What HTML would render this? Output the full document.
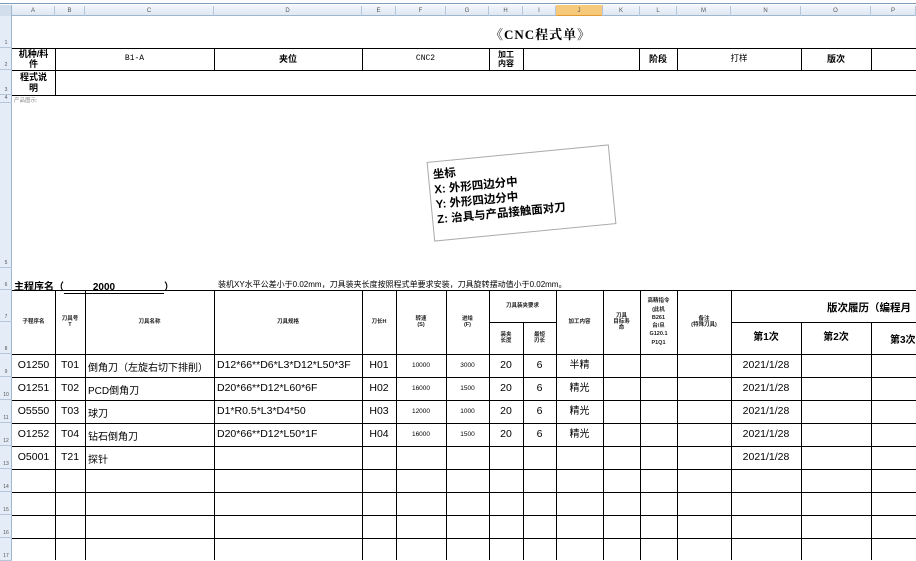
<!DOCTYPE html>
<html><head><meta charset="utf-8"><style>
*{margin:0;padding:0;box-sizing:border-box}
body{width:916px;height:560px;overflow:hidden;background:#fff;position:relative;font-family:"Liberation Sans","Noto Sans CJK SC",sans-serif;color:#000}
.a{position:absolute}
.h{position:absolute;height:1px;background:#000}
.v{position:absolute;width:1px;background:#000}
.c{position:absolute;display:flex;align-items:center;justify-content:center;text-align:center;line-height:1.15}
.ch{position:absolute;top:6px;height:10px;font-size:6px;color:#555;display:flex;align-items:center;justify-content:center;border-right:1px solid #b5c6da}
.rn{position:absolute;left:0;width:12px;font-size:5px;color:#555;text-align:center;border-bottom:1px solid #b5c6da}
.t{font-size:5.5px;font-weight:bold;color:#222}
.d{font-size:10.5px}
.s{font-size:6.5px}
</style></head><body>
<div class="a" style="left:0;top:0;width:916px;height:4px;background:#fff;border-bottom:1px solid #7f9db9"></div>
<div class="a" style="left:0;top:5px;width:916px;height:11px;background:linear-gradient(#f3f6fb,#dfe7f2);border-bottom:1px solid #9eb6ce"></div>
<div class="a" style="left:556px;top:5px;width:47px;height:11px;background:#f7c97a;border-bottom:1px solid #e39b2f"></div>
<div class="a" style="left:0;top:16px;width:12px;height:544px;background:#e4ecf7;border-right:1px solid #9eb6ce"></div>
<div class="a" style="left:0;top:5px;width:12px;height:11px;background:#d3deed;border-right:1px solid #9eb6ce"></div>
<div class="ch" style="left:12px;width:43px">A</div><div class="ch" style="left:55px;width:30px">B</div><div class="ch" style="left:85px;width:129px">C</div><div class="ch" style="left:214px;width:148px">D</div><div class="ch" style="left:362px;width:34px">E</div><div class="ch" style="left:396px;width:50px">F</div><div class="ch" style="left:446px;width:43px">G</div><div class="ch" style="left:489px;width:34px">H</div><div class="ch" style="left:523px;width:33px">I</div><div class="ch" style="left:556px;width:47px">J</div><div class="ch" style="left:603px;width:37px">K</div><div class="ch" style="left:640px;width:37px">L</div><div class="ch" style="left:677px;width:54px">M</div><div class="ch" style="left:731px;width:70px">N</div><div class="ch" style="left:801px;width:70px">O</div><div class="ch" style="left:871px;width:45px">P</div>
<div class="rn" style="top:16px;height:32px;padding-top:24px">1</div>
<div class="rn" style="top:48px;height:22px;padding-top:14px">2</div>
<div class="rn" style="top:70px;height:25px;padding-top:17px">3</div>
<div class="rn" style="top:95px;height:8px">4</div>
<div class="rn" style="top:103px;height:165px;padding-top:157px">5</div>
<div class="rn" style="top:268px;height:22px;padding-top:14px">6</div>
<div class="rn" style="top:290px;height:32px;padding-top:24px">7</div>
<div class="rn" style="top:322px;height:32px;padding-top:24px">8</div>
<div class="rn" style="top:354px;height:23px;padding-top:15px">9</div>
<div class="rn" style="top:377px;height:23px;padding-top:15px">10</div>
<div class="rn" style="top:400px;height:23px;padding-top:15px">11</div>
<div class="rn" style="top:423px;height:23px;padding-top:15px">12</div>
<div class="rn" style="top:446px;height:23px;padding-top:15px">13</div>
<div class="rn" style="top:469px;height:23px;padding-top:15px">14</div>
<div class="rn" style="top:492px;height:23px;padding-top:15px">15</div>
<div class="rn" style="top:515px;height:23px;padding-top:15px">16</div>
<div class="rn" style="top:538px;height:23px;padding-top:15px">17</div>

<div class="a" style="left:490px;top:24px;font-family:'Liberation Serif','Noto Serif CJK SC',serif;font-weight:bold;font-size:13px;letter-spacing:1px">《CNC程式单》</div>

<div class="h" style="left:12px;top:48px;width:904px"></div>
<div class="h" style="left:12px;top:70px;width:904px"></div>
<div class="h" style="left:12px;top:95px;width:904px"></div>
<div class="h" style="left:12px;top:290px;width:904px"></div>
<div class="h" style="left:489px;top:322px;width:67px"></div>
<div class="h" style="left:731px;top:322px;width:185px"></div>
<div class="h" style="left:12px;top:354px;width:904px"></div>
<div class="h" style="left:12px;top:377px;width:904px"></div>
<div class="h" style="left:12px;top:400px;width:904px"></div>
<div class="h" style="left:12px;top:423px;width:904px"></div>
<div class="h" style="left:12px;top:446px;width:904px"></div>
<div class="h" style="left:12px;top:469px;width:904px"></div>
<div class="h" style="left:12px;top:492px;width:904px"></div>
<div class="h" style="left:12px;top:515px;width:904px"></div>
<div class="h" style="left:12px;top:538px;width:904px"></div>
<div class="v" style="left:55px;top:48px;height:47px"></div>
<div class="v" style="left:214px;top:48px;height:22px"></div>
<div class="v" style="left:362px;top:48px;height:22px"></div>
<div class="v" style="left:489px;top:48px;height:22px"></div>
<div class="v" style="left:523px;top:48px;height:22px"></div>
<div class="v" style="left:639px;top:48px;height:22px"></div>
<div class="v" style="left:677px;top:48px;height:22px"></div>
<div class="v" style="left:801px;top:48px;height:22px"></div>
<div class="v" style="left:871px;top:48px;height:22px"></div>
<div class="v" style="left:55px;top:290px;height:270px"></div>
<div class="v" style="left:85px;top:290px;height:270px"></div>
<div class="v" style="left:214px;top:290px;height:270px"></div>
<div class="v" style="left:362px;top:290px;height:270px"></div>
<div class="v" style="left:396px;top:290px;height:270px"></div>
<div class="v" style="left:446px;top:290px;height:270px"></div>
<div class="v" style="left:489px;top:290px;height:270px"></div>
<div class="v" style="left:523px;top:322px;height:238px"></div>
<div class="v" style="left:556px;top:290px;height:270px"></div>
<div class="v" style="left:603px;top:290px;height:270px"></div>
<div class="v" style="left:640px;top:290px;height:270px"></div>
<div class="v" style="left:677px;top:290px;height:270px"></div>
<div class="v" style="left:731px;top:290px;height:270px"></div>
<div class="v" style="left:801px;top:322px;height:238px"></div>
<div class="v" style="left:871px;top:322px;height:238px"></div>

<div class="c" style="left:12px;top:48px;width:43px;height:22px;font-size:9px;font-weight:bold">机种/料<br>件</div>
<div class="c" style="left:55px;top:48px;width:159px;height:22px;font-size:8px;font-family:'Liberation Mono',monospace">B1-A</div>
<div class="c" style="left:214px;top:48px;width:148px;height:22px;font-size:9px;font-weight:bold">夹位</div>
<div class="c" style="left:362px;top:48px;width:127px;height:22px;font-size:8px;font-family:'Liberation Mono',monospace">CNC2</div>
<div class="c" style="left:489px;top:48px;width:34px;height:22px;font-size:8px;font-weight:bold">加工<br>内容</div>
<div class="c" style="left:639px;top:48px;width:38px;height:22px;font-size:9px;font-weight:bold">阶段</div>
<div class="c" style="left:677px;top:48px;width:124px;height:22px;font-size:8.5px">打样</div>
<div class="c" style="left:801px;top:48px;width:70px;height:22px;font-size:9px;font-weight:bold">版次</div>
<div class="c" style="left:12px;top:70px;width:43px;height:25px;font-size:9px;font-weight:bold">程式说<br>明</div>
<div class="a" style="left:14px;top:96px;font-size:5.5px;color:#888">产品图示:</div>

<div class="a" style="left:430px;top:153px;width:183px;height:80px;border:1px solid #aaa;background:#fff;transform:rotate(-5.5deg);padding:6px 4px;font-size:11.5px;font-weight:bold;line-height:15px">坐标<br>X: 外形四边分中<br>Y: 外形四边分中<br>Z: 治具与产品接触面对刀</div>

<div class="a" style="left:14px;top:278px;font-size:10px;font-weight:bold;white-space:nowrap">主程序名（<span style="display:inline-block;width:100px;border-bottom:1px solid #000;text-align:center;line-height:10px;padding-right:20px">2000</span>）</div>
<div class="a" style="left:218px;top:279px;font-size:8px;white-space:nowrap">装机XY水平公差小于0.02mm，刀具装夹长度按照程式单要求安装，刀具旋转摆动值小于0.02mm。</div>

<div class="c t" style="left:12px;top:290px;width:43px;height:64px">子程序名</div>
<div class="c t" style="left:55px;top:290px;width:30px;height:64px">刀具号<br>T</div>
<div class="c t" style="left:85px;top:290px;width:129px;height:64px">刀具名称</div>
<div class="c t" style="left:214px;top:290px;width:148px;height:64px">刀具规格</div>
<div class="c t" style="left:362px;top:290px;width:34px;height:64px">刀长H</div>
<div class="c t" style="left:396px;top:290px;width:50px;height:64px">转速<br>(S)</div>
<div class="c t" style="left:446px;top:290px;width:43px;height:64px">进给<br>(F)</div>
<div class="c t" style="left:489px;top:290px;width:67px;height:32px">刀具装夹要求</div>
<div class="c t" style="left:489px;top:322px;width:34px;height:32px">装夹<br>长度</div>
<div class="c t" style="left:523px;top:322px;width:33px;height:32px">最短<br>刃长</div>
<div class="c t" style="left:556px;top:290px;width:47px;height:64px">加工内容</div>
<div class="c t" style="left:603px;top:290px;width:37px;height:64px">刀具<br>目标寿<br>命</div>
<div class="c t" style="left:640px;top:290px;width:37px;height:64px;line-height:1.5">高精指令<br>(此机<br>B261<br>台/旦<br>G120.1<br>P1Q1</div>
<div class="c t" style="left:677px;top:290px;width:54px;height:64px">备注<br>(特殊刀具)</div>
<div class="a" style="left:827px;top:300px;font-size:10.5px;font-weight:bold;white-space:nowrap">版次履历（编程月</div>
<div class="c" style="left:731px;top:322px;width:70px;height:32px;font-size:10px;font-weight:bold">第1次</div>
<div class="c" style="left:801px;top:322px;width:70px;height:32px;font-size:10px;font-weight:bold">第2次</div>
<div class="a" style="left:890px;top:331px;font-size:10px;font-weight:bold;white-space:nowrap">第3次</div>

<div class="c d" style="left:12px;top:354px;width:43px;height:23px">O1250</div><div class="c d" style="left:55px;top:354px;width:30px;height:23px">T01</div><div class="a d" style="left:88px;top:359px;font-size:10px">倒角刀（左旋右切下排削）</div><div class="a d" style="left:217px;top:359px">D12*66**D6*L3*D12*L50*3F</div><div class="c d" style="left:362px;top:354px;width:34px;height:23px">H01</div><div class="c s" style="left:396px;top:354px;width:50px;height:23px">10000</div><div class="c s" style="left:446px;top:354px;width:43px;height:23px">3000</div><div class="c d" style="left:489px;top:354px;width:34px;height:23px">20</div><div class="c d" style="left:523px;top:354px;width:33px;height:23px">6</div><div class="c d" style="left:556px;top:354px;width:47px;height:23px;font-size:10px">半精</div><div class="c d" style="left:731px;top:354px;width:70px;height:23px">2021/1/28</div>

<div class="c d" style="left:12px;top:377px;width:43px;height:23px">O1251</div><div class="c d" style="left:55px;top:377px;width:30px;height:23px">T02</div><div class="a d" style="left:88px;top:382px;font-size:10px">PCD倒角刀</div><div class="a d" style="left:217px;top:382px">D20*66**D12*L60*6F</div><div class="c d" style="left:362px;top:377px;width:34px;height:23px">H02</div><div class="c s" style="left:396px;top:377px;width:50px;height:23px">16000</div><div class="c s" style="left:446px;top:377px;width:43px;height:23px">1500</div><div class="c d" style="left:489px;top:377px;width:34px;height:23px">20</div><div class="c d" style="left:523px;top:377px;width:33px;height:23px">6</div><div class="c d" style="left:556px;top:377px;width:47px;height:23px;font-size:10px">精光</div><div class="c d" style="left:731px;top:377px;width:70px;height:23px">2021/1/28</div>

<div class="c d" style="left:12px;top:400px;width:43px;height:23px">O5550</div><div class="c d" style="left:55px;top:400px;width:30px;height:23px">T03</div><div class="a d" style="left:88px;top:405px;font-size:10px">球刀</div><div class="a d" style="left:217px;top:405px">D1*R0.5*L3*D4*50</div><div class="c d" style="left:362px;top:400px;width:34px;height:23px">H03</div><div class="c s" style="left:396px;top:400px;width:50px;height:23px">12000</div><div class="c s" style="left:446px;top:400px;width:43px;height:23px">1000</div><div class="c d" style="left:489px;top:400px;width:34px;height:23px">20</div><div class="c d" style="left:523px;top:400px;width:33px;height:23px">6</div><div class="c d" style="left:556px;top:400px;width:47px;height:23px;font-size:10px">精光</div><div class="c d" style="left:731px;top:400px;width:70px;height:23px">2021/1/28</div>

<div class="c d" style="left:12px;top:423px;width:43px;height:23px">O1252</div><div class="c d" style="left:55px;top:423px;width:30px;height:23px">T04</div><div class="a d" style="left:88px;top:428px;font-size:10px">钻石倒角刀</div><div class="a d" style="left:217px;top:428px">D20*66**D12*L50*1F</div><div class="c d" style="left:362px;top:423px;width:34px;height:23px">H04</div><div class="c s" style="left:396px;top:423px;width:50px;height:23px">16000</div><div class="c s" style="left:446px;top:423px;width:43px;height:23px">1500</div><div class="c d" style="left:489px;top:423px;width:34px;height:23px">20</div><div class="c d" style="left:523px;top:423px;width:33px;height:23px">6</div><div class="c d" style="left:556px;top:423px;width:47px;height:23px;font-size:10px">精光</div><div class="c d" style="left:731px;top:423px;width:70px;height:23px">2021/1/28</div>

<div class="c d" style="left:12px;top:446px;width:43px;height:23px">O5001</div><div class="c d" style="left:55px;top:446px;width:30px;height:23px">T21</div><div class="a d" style="left:88px;top:451px;font-size:10px">探针</div><div class="c d" style="left:731px;top:446px;width:70px;height:23px">2021/1/28</div>
</body></html>
